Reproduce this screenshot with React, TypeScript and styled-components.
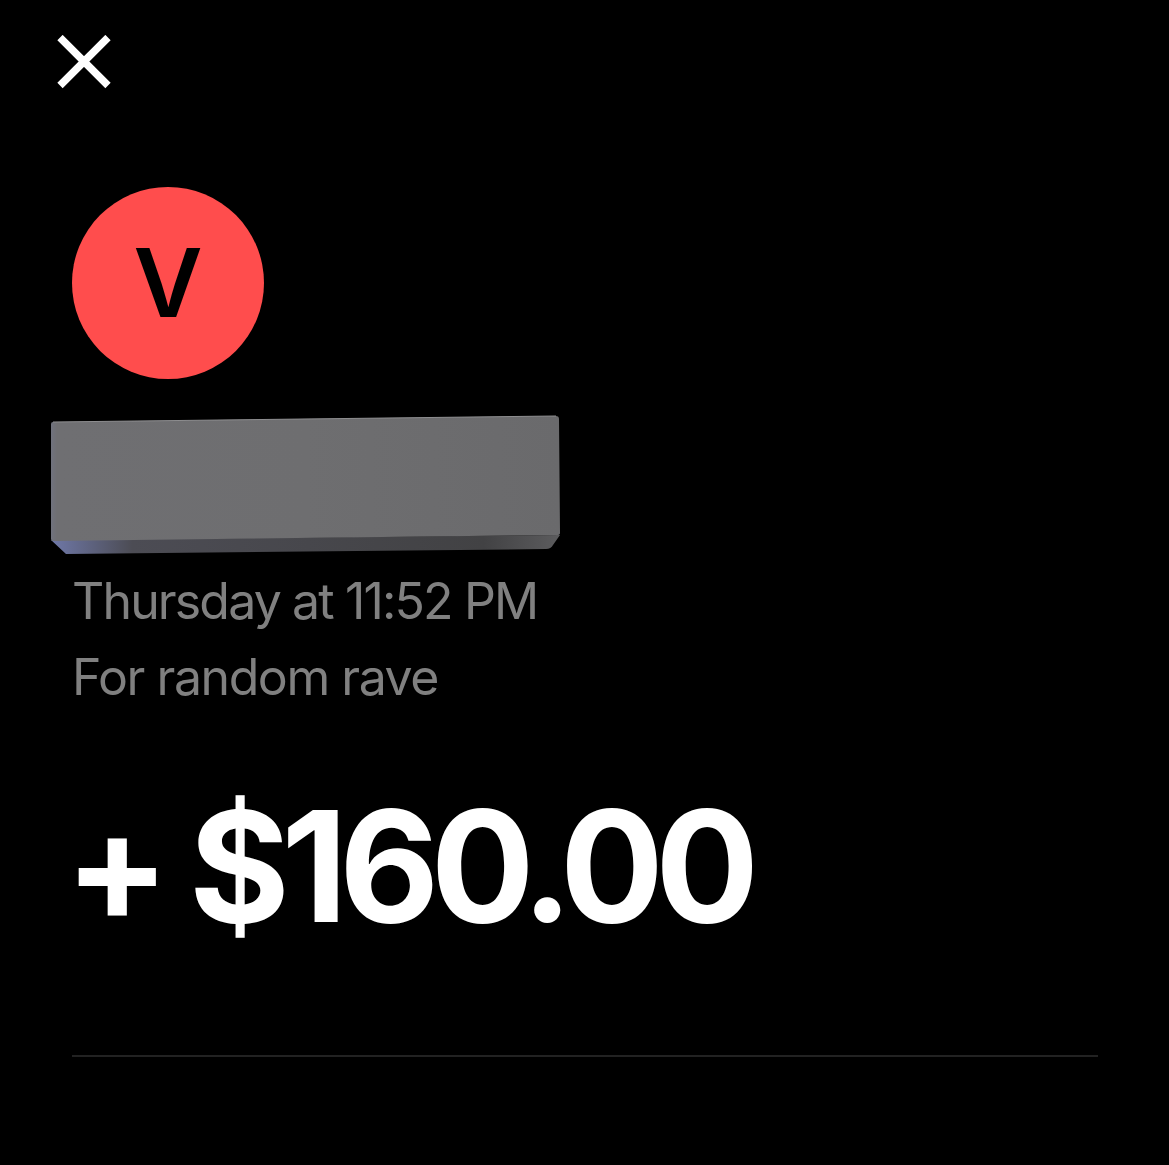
import React from "react";
import styled, { createGlobalStyle } from "styled-components";

const GlobalStyle = createGlobalStyle`
  html, body {
    margin: 0;
    background: #000;
  }
`;

const Screen = styled.div`
  width: 1169px;
  height: 1165px;
  box-sizing: border-box;
  padding: 35px 71px 0 72px;
  background: #000;
  font-family: Inter, "Liberation Sans", sans-serif;
  overflow: hidden;
`;

const CloseButton = styled.button`
  display: block;
  width: 54px;
  height: 54px;
  margin-left: -15px;
  padding: 0;
  border: none;
  background: none;
`;

const Avatar = styled.div`
  width: 192px;
  height: 192px;
  margin-top: 98px;
  border-radius: 50%;
  background: #ff4d4d;
  color: #000;
  font-size: 95px;
  font-weight: 560;
  line-height: 192px;
  text-align: center;
`;

const Redaction = styled.svg`
  display: block;
  margin: 36px 0 0 -22px;
`;

const MetaBlock = styled.div`
  margin-top: 8px;
`;

const MetaLine = styled.div<{ $spacing: number }>`
  color: #808080;
  font-size: 50px;
  font-weight: 400;
  letter-spacing: ${(p) => p.$spacing}px;
  line-height: 76px;
  white-space: nowrap;
`;

const Amount = styled.div`
  margin: 58px 0 0 -7px;
  color: #fff;
  font-size: 154px;
  font-weight: 700;
  letter-spacing: -8.5px;
  line-height: 186px;
  white-space: nowrap;
`;

const Divider = styled.hr`
  margin: 96px 0 0;
  border: none;
  height: 2px;
  background: #222;
`;

const App: React.FC = () => {
  return (
    <Screen>
      <GlobalStyle />
      <CloseButton aria-label="Close">
        <svg width="54" height="54" viewBox="0 0 54 54">
          <path d="M3 2.5 L51 50.5 M51 2.5 L3 50.5" stroke="#fff" strokeWidth="7.5" fill="none" />
        </svg>
      </CloseButton>
      <Avatar>V</Avatar>
      <Redaction width="512" height="140" viewBox="0 0 512 140">
        <defs>
          <linearGradient id="face" x1="0" y1="0" x2="1" y2="0">
            <stop offset="0" stopColor="#70727e" />
            <stop offset="0.012" stopColor="#6f6f72" />
            <stop offset="0.5" stopColor="#6e6e70" />
            <stop offset="1" stopColor="#6a6a6c" />
          </linearGradient>
          <linearGradient id="lip" x1="0" y1="0" x2="1" y2="0">
            <stop offset="0" stopColor="#6f78a8" />
            <stop offset="0.16" stopColor="#4c4c54" />
            <stop offset="0.85" stopColor="#424244" />
            <stop offset="1" stopColor="#5c5c5e" />
          </linearGradient>
        </defs>
        <path d="M1 125 L16 139 L496 134 Q501 134 503 130 L510 120 Z" fill="url(#lip)" />
        <path
          d="M3 7 L506 1 Q509 1 509 4 L510 118 Q510 120 507 120 L3 126 Q1 126 1 124 L1 9 Q1 7 3 7 Z"
          fill="url(#face)"
        />
        <path d="M3 7 L506 1" stroke="#8e8e90" strokeWidth="1" fill="none" />
      </Redaction>
      <MetaBlock>
        <MetaLine $spacing={-1.85}>Thursday at 11:52 PM</MetaLine>
        <MetaLine $spacing={-1.45}>For random rave</MetaLine>
      </MetaBlock>
      <Amount>+ $160.00</Amount>
      <Divider />
    </Screen>
  );
};

export default App;
